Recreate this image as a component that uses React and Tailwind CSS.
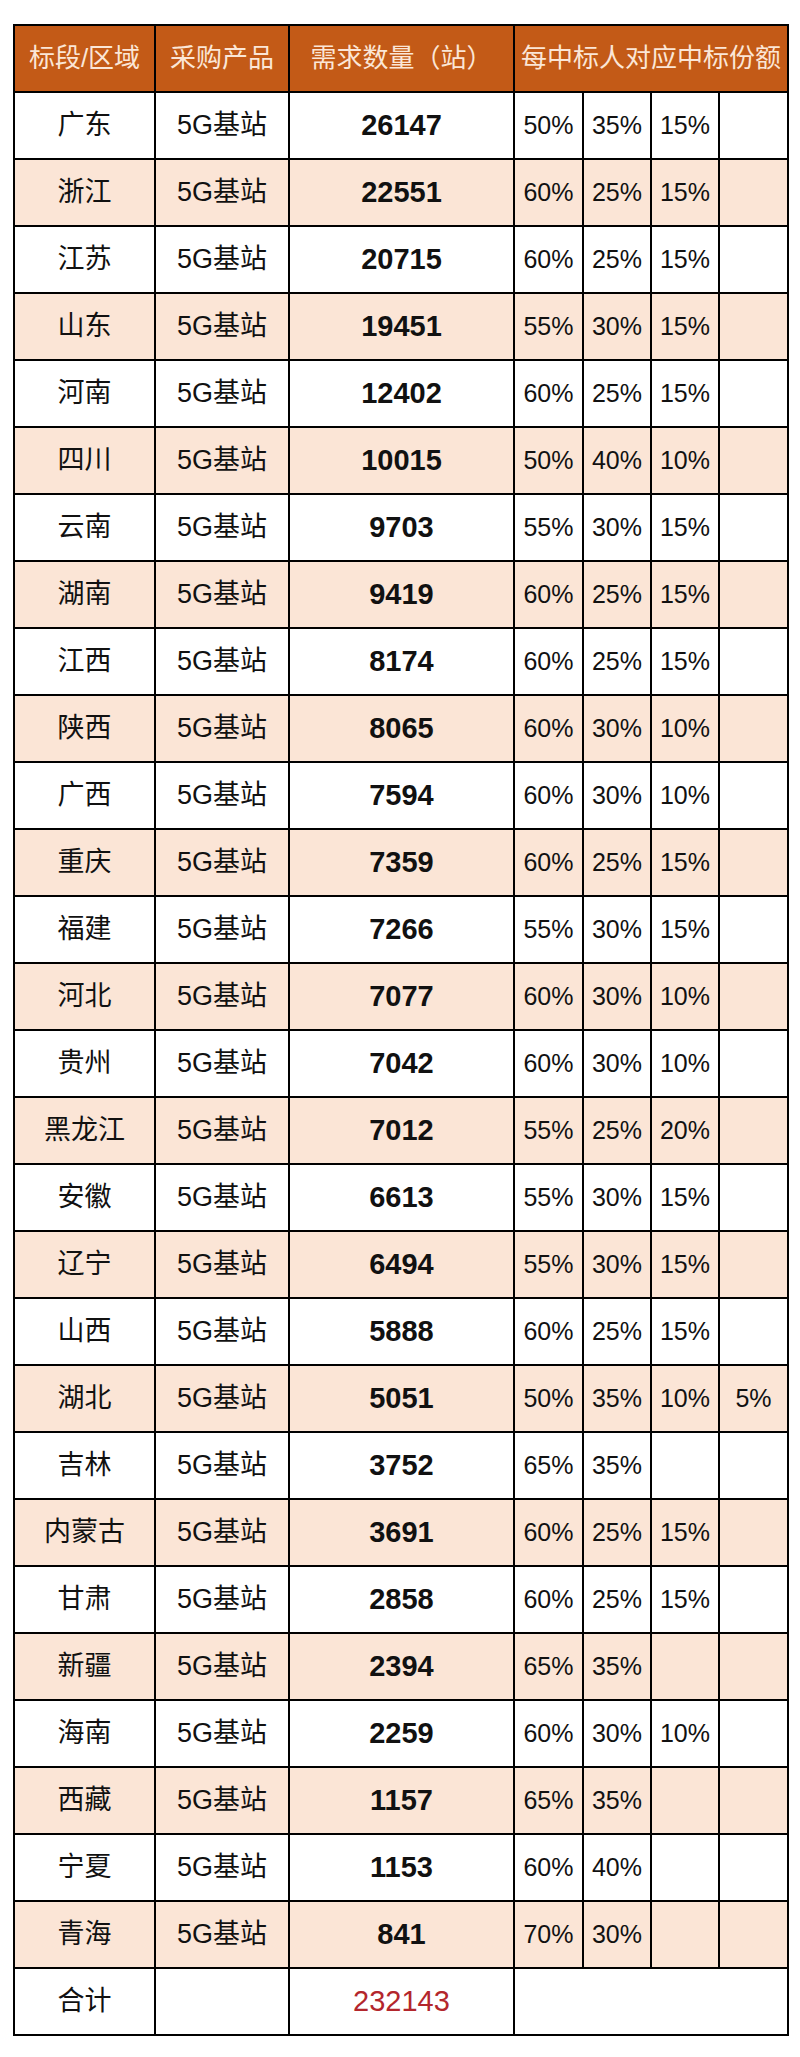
const rows = [
  ["广东", 26147, ["50%", "35%", "15%", ""]],
  ["浙江", 22551, ["60%", "25%", "15%", ""]],
  ["江苏", 20715, ["60%", "25%", "15%", ""]],
  ["山东", 19451, ["55%", "30%", "15%", ""]],
  ["河南", 12402, ["60%", "25%", "15%", ""]],
  ["四川", 10015, ["50%", "40%", "10%", ""]],
  ["云南", 9703, ["55%", "30%", "15%", ""]],
  ["湖南", 9419, ["60%", "25%", "15%", ""]],
  ["江西", 8174, ["60%", "25%", "15%", ""]],
  ["陕西", 8065, ["60%", "30%", "10%", ""]],
  ["广西", 7594, ["60%", "30%", "10%", ""]],
  ["重庆", 7359, ["60%", "25%", "15%", ""]],
  ["福建", 7266, ["55%", "30%", "15%", ""]],
  ["河北", 7077, ["60%", "30%", "10%", ""]],
  ["贵州", 7042, ["60%", "30%", "10%", ""]],
  ["黑龙江", 7012, ["55%", "25%", "20%", ""]],
  ["安徽", 6613, ["55%", "30%", "15%", ""]],
  ["辽宁", 6494, ["55%", "30%", "15%", ""]],
  ["山西", 5888, ["60%", "25%", "15%", ""]],
  ["湖北", 5051, ["50%", "35%", "10%", "5%"]],
  ["吉林", 3752, ["65%", "35%", "", ""]],
  ["内蒙古", 3691, ["60%", "25%", "15%", ""]],
  ["甘肃", 2858, ["60%", "25%", "15%", ""]],
  ["新疆", 2394, ["65%", "35%", "", ""]],
  ["海南", 2259, ["60%", "30%", "10%", ""]],
  ["西藏", 1157, ["65%", "35%", "", ""]],
  ["宁夏", 1153, ["60%", "40%", "", ""]],
  ["青海", 841, ["70%", "30%", "", ""]],
];

const cjk = "font-['Liberation_Sans','Noto_Sans_CJK_SC',sans-serif]";

export default function App() {
  return (
    <div className={`w-[800px] h-[2057px] bg-white pt-[24px] pl-[13px] ${cjk}`}>
      <table className="border-collapse table-fixed w-[774px] text-[#111]">
        <colgroup>
          <col className="w-[141px]" />
          <col className="w-[134px]" />
          <col className="w-[225px]" />
          <col className="w-[69px]" />
          <col className="w-[68px]" />
          <col className="w-[68px]" />
          <col className="w-[69px]" />
        </colgroup>
        <thead>
          <tr className="h-[67px] bg-[#c35a17] text-[#fbe6d6] text-[26px]">
            <th className="border-2 border-black font-normal">标段/区域</th>
            <th className="border-2 border-black font-normal">采购产品</th>
            <th className="border-2 border-black font-normal">需求数量（站）</th>
            <th colSpan={4} className="border-2 border-black font-normal whitespace-nowrap">
              每中标人对应中标份额
            </th>
          </tr>
        </thead>
        <tbody>
          {rows.map(([name, qty, shares], i) => (
            <tr
              key={name}
              className={`h-[67px] text-center ${i % 2 === 1 ? "bg-[#fbe5d6]" : "bg-white"}`}
            >
              <td className="border-2 border-black text-[27px]">{name}</td>
              <td className="border-2 border-black text-[27px]">5G基站</td>
              <td className="border-2 border-black text-[29px] font-bold">{qty}</td>
              {shares.map((s, j) => (
                <td key={j} className="border-2 border-black text-[25px]">
                  {s}
                </td>
              ))}
            </tr>
          ))}
          <tr className="h-[67px] text-center bg-white">
            <td className="border-2 border-black text-[27px]">合计</td>
            <td className="border-2 border-black"></td>
            <td className="border-2 border-black text-[29px] text-[#b3262c]">232143</td>
            <td colSpan={4} className="border-2 border-black"></td>
          </tr>
        </tbody>
      </table>
    </div>
  );
}
